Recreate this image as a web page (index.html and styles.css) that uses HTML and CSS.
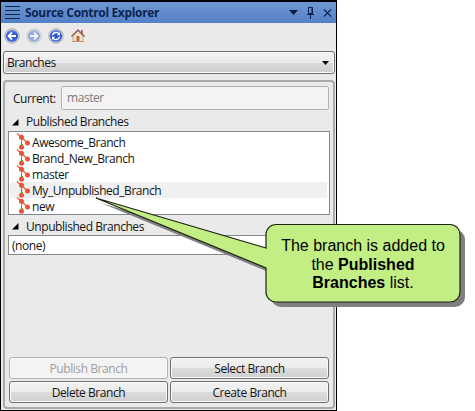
FILE: index.html
```
<!DOCTYPE html>
<html lang="en">
<head>
<meta charset="utf-8">
<title>Source Control Explorer</title>
<link rel="stylesheet" href="styles.css">
</head>
<body>
<svg class="defs" width="0" height="0" aria-hidden="true">
  <defs>
    <linearGradient id="ball" x1="0" y1="0" x2="0" y2="1"><stop offset="0" stop-color="#5d84df"/><stop offset=".5" stop-color="#2450c4"/><stop offset="1" stop-color="#4777e2"/></linearGradient>
    <g id="branch">
      <path d="M0 -.500l4.500 4 6 5.500M4.500 3v10" fill="none" stroke="#ee5236" stroke-width="1.100"/>
      <path d="M5.500 10v2" stroke="#32c832"/>
      <circle cx="4.500" cy="3.300" r="2.500" fill="#ee5236"/><circle cx="10.500" cy="9" r="2.500" fill="#ee5236"/><circle cx="4.500" cy="13.200" r="2.500" fill="#ee5236"/>
    </g>
  </defs>
</svg>
<main class="window">
  <header class="titlebar">
    <svg class="grip" width="15" height="14" viewBox="0 0 15 14"><path d="M0 .5h15M0 4.5h15M0 8.5h15M0 12.5h15" stroke="#0b2552"/></svg>
    <h1>Source Control Explorer</h1>
    <svg class="controls" width="44" height="14" viewBox="0 0 44 14">
      <path d="M1 4h9L5.500 9z" fill="#071d45"/>
      <path d="M20.500 1.500h4v6h-4zM19 8.500h7M22.500 9v4M24 2v6" fill="none" stroke="#071d45"/>
      <path d="M36 3.500l7 7M43 3.500l-7 7" stroke="#0b2552" stroke-width="1.1"/>
    </svg>
  </header>
  <nav class="toolbar">
    <svg width="16" height="16" viewBox="0 0 16 16"><circle cx="8" cy="8" r="7.200" fill="#d6d6dc" stroke="#a9a9ad"/><circle cx="8" cy="8" r="6" fill="url(#ball)"/><path d="M12 8H5M8 4.500L4.500 8 8 11.500" fill="none" stroke="#fff" stroke-width="1.8"/></svg>
    <svg class="faded" width="16" height="16" viewBox="0 0 16 16"><circle cx="8" cy="8" r="7.200" fill="#d6d6dc" stroke="#a9a9ad"/><circle cx="8" cy="8" r="6" fill="url(#ball)"/><path d="M4 8h7M8 4.500L11.500 8 8 11.500" fill="none" stroke="#fff" stroke-width="1.8"/></svg>
    <svg width="16" height="16" viewBox="0 0 16 16"><circle cx="8" cy="8" r="7.200" fill="#d6d6dc" stroke="#a9a9ad"/><circle cx="8" cy="8" r="6" fill="url(#ball)"/><path d="M4.500 7.500C5 4 9.500 3.500 11 6M11.500 8.500C11 12 6.500 12.500 5 10" fill="none" stroke="#fff" stroke-width="1.300"/><path d="M12 4v3.200H8.800zM4 12V8.800h3.200z" fill="#fff"/></svg>
    <svg width="16" height="16" viewBox="0 0 16 16"><path d="M11 2h2v4h-2z" fill="#b5705a"/><path d="M3 7.500L8 3l5 4.500V13.500H3z" fill="#f1dfce" stroke="#b99a85" stroke-width=".8"/><path d="M1.500 8.500L8 2 14.500 8.500" fill="none" stroke="#8d6a5d" stroke-width="1.500"/><path d="M6.500 8.500h3v5h-3z" fill="#c46c35"/><path d="M7.500 8h1v2h-1z" fill="#754020"/><path d="M2.500 13.500h3M10.500 13.500h3" stroke="#b98358"/></svg>
  </nav>
  <div class="combo"><span>Branches</span><svg width="7" height="4" viewBox="0 0 7 4"><path d="M0 0h7L3.500 4z" fill="#000"/></svg></div>
  <section class="group">
    <div class="current"><span>Current:</span><div class="field">master</div></div>
    <h2><svg width="7" height="7" viewBox="0 0 7 7"><path d="M6.500 0v6.500H0z"/></svg>Published Branches</h2>
    <ul class="list">
      <li><svg><use href="#branch"/></svg><span>Awesome_Branch</span></li>
      <li><svg><use href="#branch"/></svg><span>Brand_New_Branch</span></li>
      <li><svg><use href="#branch"/></svg><span>master</span></li>
      <li class="selected"><svg><use href="#branch"/></svg><span>My_Unpublished_Branch</span></li>
      <li><svg><use href="#branch"/></svg><span>new</span></li>
    </ul>
    <h2 class="second"><svg width="7" height="7" viewBox="0 0 7 7"><path d="M6.500 0v6.500H0z"/></svg>Unpublished Branches</h2>
    <div class="empty">(none)</div>
    <div class="buttons">
      <button disabled>Publish Branch</button><button>Select Branch</button>
      <button>Delete Branch</button><button>Create Branch</button>
    </div>
  </section>
</main>
<aside class="callout">
  <svg width="379" height="120" viewBox="0 0 379 120">
    <path d="M181 27.500H355A10 10 0 0 1 365 37.500V95A10 10 0 0 1 355 105H181A10 10 0 0 1 171 95V71L1 1 171 51V37.500A10 10 0 0 1 181 27.500Z" fill="#808080" transform="translate(5 5)"/>
    <path d="M181 27.500H355A10 10 0 0 1 365 37.500V95A10 10 0 0 1 355 105H181A10 10 0 0 1 171 95V71L1 1 171 51V37.500A10 10 0 0 1 181 27.500Z" fill="#c2ee84" stroke="#1c2413" stroke-width="1.200"/>
  </svg>
  <p>The branch is added to<br>the <b>Published</b><br><b>Branches</b> list.</p>
</aside>
</body>
</html>
```
FILE: styles.css
```
* { box-sizing: border-box; }
body { margin: 0; background: #fff; font: 12px/16px "Open Sans", sans-serif; letter-spacing: -.44px; color: #151515; }
.defs { position: absolute; }
svg { display: block; flex: none; }
.window { width: 337px; height: 411px; border: 1px solid #000; border-top-width: 2px; background: #eaeaea; display: flex; flex-direction: column; }
.titlebar { height: 21px; flex: none; display: flex; align-items: center; background: linear-gradient(#6f97d3, #5380c6); padding: 0 4px; }
h1 { margin: 0 0 0 5px; font: bold 12px/18px "Open Sans", sans-serif; color: #0a2450; white-space: nowrap; letter-spacing: -.34px; }
.controls { margin-left: auto; }
.toolbar { height: 28px; flex: none; padding: 5px 0 0 3px; display: flex; gap: 6px; }
.faded { opacity: .48; }
.combo { height: 23px; flex: none; margin: 0 1px 0 2px; padding: 0 5px 0 3px; display: flex; align-items: center; justify-content: space-between; border: 1px solid #707070; border-radius: 3px; box-shadow: inset 0 0 0 1px #f9f9f9; background: linear-gradient(#f2f2f2, #ebebeb 50%, #dcdcdc 50%, #cecece); }
.combo span { padding-top: 1px; }
.group { flex: 1; margin: 6px 1px 1px 2px; padding: 4px 3px 4px; border: 2px solid #aaa; border-radius: 4px; display: flex; flex-direction: column; }
.current { height: 24px; padding: 0 1px 0 5px; display: flex; align-items: center; justify-content: space-between; }
.current > span { padding-top: 2px; }
.field { width: 268px; height: 24px; padding: 3px 5px; border: 1px solid #afb4b4; border-radius: 2px; background: #f3f3f3; color: #7a7a7a; }
h2 { margin: 0; height: 21px; padding: 3px 0 0 4px; font: inherit; display: flex; align-items: center; gap: 7px; white-space: nowrap; }
.list { list-style: none; margin: 0; padding: 2px 1px; height: 84px; flex: none; background: #fff; border: 1px solid #828790; }
.list li { height: 16px; padding-left: 7px; display: flex; align-items: center; }
.list svg { width: 15px; height: 16px; overflow: visible; }
.list span { margin-top: 1px; }
.list .selected { background: linear-gradient(#f0f0f0, #f0f0f0) no-repeat 0 0 / calc(100% - 1px) 100%; }
.second { height: 20px; }
.empty { height: 20px; border: 1px solid #828790; background: #fff; padding: 2px 3px; }
.buttons { margin: auto 1px 0; display: grid; grid-template-columns: 159px 159px; grid-template-rows: 22px 22px; gap: 2px; }
button { font: inherit; letter-spacing: inherit; color: #151515; padding: 1px 0 0; border: 1px solid #707070; border-radius: 3px; box-shadow: inset 0 0 0 1px #f9f9f9; background: linear-gradient(#f2f2f2, #ebebeb 50%, #dddddd 50%, #cfcfcf); }
button:disabled { color: #a0a0a0; background: #f3f3f3; border-color: #adb2b5; }
.callout { position: absolute; left: 95px; top: 197px; width: 379px; height: 120px; }
.callout p { position: absolute; left: 172px; top: 40px; width: 192px; margin: 0; text-align: center; font: 16px/18.5px "Liberation Sans", sans-serif; letter-spacing: 0; color: #000; }
```
